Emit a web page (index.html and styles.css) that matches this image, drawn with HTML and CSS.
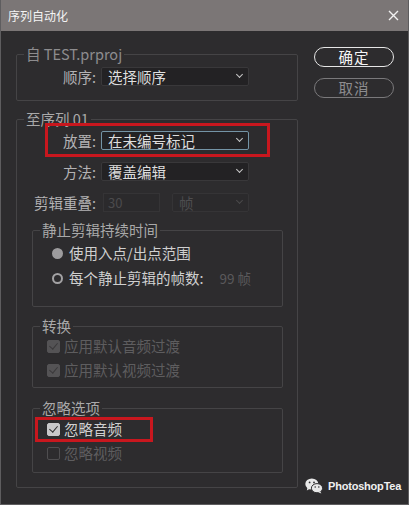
FILE: index.html
```html
<!DOCTYPE html>
<html lang="zh-CN">
<head>
    <meta charset="UTF-8">
    <title>序列自动化</title>
    <link rel="stylesheet" href="styles.css">
</head>
<body>
    <div class="window">
        <div class="titlebar">
            <span class="title">序列自动化</span>
            <svg class="close" width="11" height="11" viewBox="0 0 11 11">
                <path d="M1 1 L10 10 M10 1 L1 10" stroke="#f2f2f2" stroke-width="1.4" fill="none"/>
            </svg>
        </div>

        <div class="content">
            <div class="main">
                <fieldset class="group">
                    <legend class="dim">自 TEST.prproj</legend>
                    <div class="inner from">
                        <div class="row">
                            <span class="lbl">顺序:</span>
                            <div class="select"><span>选择顺序</span><span class="chev"></span></div>
                        </div>
                    </div>
                </fieldset>

                <fieldset class="group to">
                    <legend>至序列 01</legend>
                    <div class="inner">
                        <div class="row">
                            <span class="lbl">放置:</span>
                            <div class="select focus"><span>在未编号标记</span><span class="chev"></span></div>
                            <span class="mark mark-place"></span>
                        </div>
                        <div class="row">
                            <span class="lbl">方法:</span>
                            <div class="select"><span>覆盖编辑</span><span class="chev"></span></div>
                        </div>
                        <div class="row">
                            <span class="lbl">剪辑重叠:</span>
                            <div class="overlap">
                                <div class="field off">30</div>
                                <div class="select off"><span>帧</span><span class="chev"></span></div>
                            </div>
                        </div>

                        <fieldset class="sub still">
                            <legend>静止剪辑持续时间</legend>
                            <div class="inner">
                                <div class="opt radio-row">
                                    <span class="radio on"></span>
                                    <span>使用入点/出点范围</span>
                                </div>
                                <div class="opt radio-row">
                                    <span class="radio"></span>
                                    <span>每个静止剪辑的帧数:</span>
                                    <span class="frames">99 帧</span>
                                </div>
                            </div>
                        </fieldset>

                        <fieldset class="sub trans">
                            <legend>转换</legend>
                            <div class="inner">
                                <div class="opt disabled">
                                    <span class="check dis"></span>
                                    <span>应用默认音频过渡</span>
                                </div>
                                <div class="opt disabled">
                                    <span class="check dis"></span>
                                    <span>应用默认视频过渡</span>
                                </div>
                            </div>
                        </fieldset>

                        <fieldset class="sub ignore">
                            <legend>忽略选项</legend>
                            <div class="inner">
                                <div class="opt">
                                    <span class="check on"></span>
                                    <span>忽略音频</span>
                                    <span class="mark mark-audio"></span>
                                </div>
                                <div class="opt disabled">
                                    <span class="check"></span>
                                    <span>忽略视频</span>
                                </div>
                            </div>
                        </fieldset>
                    </div>
                </fieldset>
            </div>

            <div class="actions">
                <button class="pill primary">确定</button>
                <button class="pill">取消</button>
            </div>
        </div>

        <div class="watermark">
            <svg width="18" height="16" viewBox="0 0 18 16">
                <ellipse cx="6.8" cy="6" rx="6.5" ry="5.5" fill="#e8e8e8"/>
                <path d="M2.5 9.5 L1.8 12.5 L5 10.8 Z" fill="#e8e8e8"/>
                <circle cx="4.6" cy="4.4" r="0.9" fill="#2d2c2e"/>
                <circle cx="9" cy="4.4" r="0.9" fill="#2d2c2e"/>
                <ellipse cx="12" cy="10.2" rx="5.6" ry="4.6" fill="#e8e8e8" stroke="#2d2c2e" stroke-width="1"/>
                <path d="M15.2 13.2 L16.3 15.6 L13.2 14.2 Z" fill="#e8e8e8"/>
                <circle cx="10.2" cy="9" r="0.75" fill="#2d2c2e"/>
                <circle cx="13.8" cy="9" r="0.75" fill="#2d2c2e"/>
            </svg>
            <span>PhotoshopTea</span>
        </div>
    </div>
</body>
</html>
```

FILE: styles.css
```css
*{
    margin: 0;
    padding: 0;
    box-sizing: border-box;
}

body{
    background-color: #2d2c2e;
    font-family: "Noto Sans CJK SC", "Liberation Sans", sans-serif;
    color: #c4c4c4;
    line-height: 18px;
}

.window{
    position: relative;
    width: 409px;
    height: 505px;
    background-color: #2d2c2e;
    border: 1px solid #5e5d5f;
    border-top: none;
    overflow: hidden;
}

.titlebar{
    height: 31px;
    margin: 0 -1px;
    background-color: #7b7676;
    display: flex;
    align-items: center;
    justify-content: space-between;
    padding: 0 10px 0 8px;
}

.title{
    color: #f4f4f4;
    font-size: 12px;
    line-height: 16px;
}

.content{
    display: flex;
    gap: 16px;
    padding: 14px 0 0 15px;
}

.main{
    width: 282px;
}

/* group boxes */
fieldset{
    display: block;
    border: 1px solid #454446;
    border-radius: 2px;
    min-width: 0;
}

legend{
    font-size: 14.5px;
    line-height: 18px;
    height: 18px;
    margin-left: 7px;
    padding: 0 2px;
    color: #a9a9a9;
    white-space: nowrap;
}

legend.dim{
    color: #8d8c8e;
}

.group.to{
    margin-top: 9px;
}

.from{
    padding: 4px 0 14px;
}

.to > .inner{
    padding: 3px 0 14px;
}

.row{
    position: relative;
    display: flex;
    align-items: center;
    gap: 5px;
    height: 19px;
    font-size: 14.5px;
}

.row + .row{
    margin-top: 12px;
}

.lbl{
    width: 79px;
    text-align: right;
    color: #b3b2b4;
    white-space: nowrap;
}

.select{
    width: 148px;
    height: 19px;
    background-color: #232224;
    border: 1px solid #39383a;
    border-radius: 2px;
    display: flex;
    align-items: center;
    justify-content: space-between;
    padding: 0 6px 0 6px;
    color: #dedede;
    font-size: 14.5px;
    line-height: 17px;
}

.select.focus{
    border-color: #7494a6;
}

.chev{
    width: 5px;
    height: 5px;
    border-right: 1.2px solid #c8c8c8;
    border-bottom: 1.2px solid #c8c8c8;
    transform: translateY(-2px) rotate(45deg);
}

.overlap{
    display: flex;
    gap: 12px;
    margin-left: 2px;
}

.field{
    width: 57px;
    height: 19px;
    border: 1px solid #353436;
    background-color: #2b2a2c;
    color: #4c4b4d;
    font-size: 13px;
    line-height: 17px;
    padding-left: 4px;
}

.select.off{
    width: 77px;
    background-color: #2b2a2c;
    border-color: #353436;
    color: #4e4d4f;
}

.select.off .chev{
    border-color: #4a494b;
}

/* inner boxes */
.sub{
    margin: 0 14px 0 15px;
}

.still{
    margin-top: 9px;
}

.still .inner{
    padding: 4px 0 18px 19px;
}

.trans{
    margin-top: 10px;
}

.trans .inner{
    padding: 1px 0 7px 14px;
}

.ignore{
    margin-top: 11px;
}

.ignore .inner{
    padding: 2px 0 9px 14px;
}

.opt{
    position: relative;
    display: flex;
    align-items: center;
    gap: 4px;
    height: 20px;
    line-height: 20px;
    font-size: 14.5px;
    color: #cfcfcf;
    white-space: nowrap;
}

.opt + .opt{
    margin-top: 4px;
}

.still .opt + .opt{
    margin-top: 5px;
}

.radio-row{
    gap: 6px;
}

.radio{
    width: 11px;
    height: 11px;
    border-radius: 50%;
    border: 2px solid #a3a2a4;
}

.radio.on{
    background-color: #9d9c9e;
    border-color: #9d9c9e;
}

.frames{
    margin-left: 10px;
    color: #5a595b;
    font-size: 13.5px;
}

.opt.disabled{
    color: #5e5d5f;
}

.check{
    width: 13px;
    height: 13px;
    border: 1.5px solid #4f4e50;
    border-radius: 2px;
    position: relative;
}

.check.dis{
    background-color: #545355;
    border-color: #545355;
}

.check.on{
    background-color: #c9c8ca;
    border-color: #c9c8ca;
}

.check.dis::after,
.check.on::after{
    content: "";
    position: absolute;
    left: 3px;
    top: 0px;
    width: 4px;
    height: 7px;
    border-right: 1.6px solid #2d2c2e;
    border-bottom: 1.6px solid #2d2c2e;
    transform: rotate(40deg);
}

.check.dis::after{
    border-color: #3a393b;
}

/* red highlight boxes over the screenshot */
.mark{
    position: absolute;
    border: 3px solid #c8171e;
    pointer-events: none;
}

.mark-place{
    left: 28px;
    top: -8px;
    width: 225px;
    height: 34px;
}

.mark-audio{
    left: -12px;
    top: -2px;
    width: 118px;
    height: 25px;
}

/* buttons */
.actions{
    display: flex;
    flex-direction: column;
    gap: 11px;
    margin-top: 2px;
}

.pill{
    width: 80px;
    height: 20px;
    border-radius: 10px;
    border: 1.5px solid #7a797b;
    background-color: transparent;
    color: #8e8d8f;
    font-family: "Noto Sans CJK SC", sans-serif;
    font-size: 14.5px;
    line-height: 16px;
    letter-spacing: 1px;
}

.pill.primary{
    border-color: #e6e6e6;
    color: #f6f6f6;
}

.watermark{
    position: absolute;
    left: 304px;
    top: 477px;
    display: flex;
    align-items: center;
    gap: 5px;
    color: #f0f0f0;
    font-family: "Liberation Sans", sans-serif;
    font-weight: bold;
    font-size: 11px;
    letter-spacing: -0.2px;
}
```
